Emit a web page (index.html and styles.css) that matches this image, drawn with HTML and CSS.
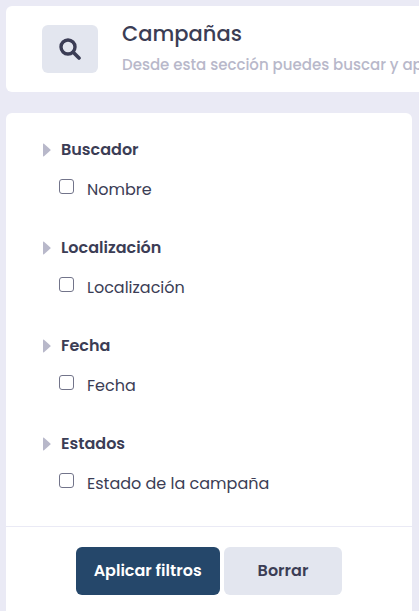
FILE: index.html
```html
<!DOCTYPE html>
<html lang="es">
<head>
<meta charset="utf-8">
<meta name="viewport" content="width=device-width, initial-scale=1">
<title>Campañas</title>
<link rel="stylesheet" href="styles.css">
</head>
<body>
<header class="page-header">
  <span class="header-icon">
    <svg viewBox="0 0 22 22" width="22" height="22" aria-hidden="true"><circle cx="9" cy="9" r="7" fill="none" stroke="currentColor" stroke-width="3.4"/><path d="M14.2 14.2L20 20" stroke="currentColor" stroke-width="3.6" stroke-linecap="round"/></svg>
  </span>
  <div class="header-text">
    <h1 class="title">Campañas</h1>
    <p class="subtitle">Desde esta sección puedes buscar y ap</p>
  </div>
</header>
<form class="panel">
  <div class="groups">
    <section class="group">
      <h2 class="group-title"><button type="button" class="toggle"><svg class="arrow" viewBox="0 0 8 14" aria-hidden="true"><path d="M0 1.2Q0 0 1 .8L7.4 6.4Q8 7 7.4 7.6L1 13.2Q0 14 0 12.8Z"/></svg>Buscador</button></h2>
      <label class="option"><input class="check" type="checkbox"><span>Nombre</span></label>
    </section>
    <section class="group">
      <h2 class="group-title"><button type="button" class="toggle"><svg class="arrow" viewBox="0 0 8 14" aria-hidden="true"><path d="M0 1.2Q0 0 1 .8L7.4 6.4Q8 7 7.4 7.6L1 13.2Q0 14 0 12.8Z"/></svg>Localización</button></h2>
      <label class="option"><input class="check" type="checkbox"><span>Localización</span></label>
    </section>
    <section class="group">
      <h2 class="group-title"><button type="button" class="toggle"><svg class="arrow" viewBox="0 0 8 14" aria-hidden="true"><path d="M0 1.2Q0 0 1 .8L7.4 6.4Q8 7 7.4 7.6L1 13.2Q0 14 0 12.8Z"/></svg>Fecha</button></h2>
      <label class="option"><input class="check" type="checkbox"><span>Fecha</span></label>
    </section>
    <section class="group">
      <h2 class="group-title"><button type="button" class="toggle"><svg class="arrow" viewBox="0 0 8 14" aria-hidden="true"><path d="M0 1.2Q0 0 1 .8L7.4 6.4Q8 7 7.4 7.6L1 13.2Q0 14 0 12.8Z"/></svg>Estados</button></h2>
      <label class="option"><input class="check" type="checkbox"><span>Estado de la campaña</span></label>
    </section>
  </div>
  <div class="actions">
    <button type="submit" class="btn btn-primary">Aplicar filtros</button>
    <button type="reset" class="btn btn-light">Borrar</button>
  </div>
</form>
</body>
</html>
```
FILE: styles.css
```css
* {
  box-sizing: border-box;
}

body {
  margin: 0;
  padding: 6px 0 0 6px;
  background: #eaeaf5;
  color: #3b3d55;
  font-family: Poppins, Inter, "Open Sans", sans-serif;
  font-size: 16px;
  line-height: 24px;
  overflow-x: hidden;
}

button,
input {
  font: inherit;
  color: inherit;
}

h1,
h2,
p {
  margin: 0;
}

.page-header {
  display: flex;
  align-items: center;
  gap: 24px;
  padding: 12px 0 12px 36px;
  background: #fff;
  border-radius: 6px 0 0 6px;
  overflow: hidden;
}

.header-icon {
  display: flex;
  flex: none;
  align-items: center;
  justify-content: center;
  width: 56px;
  height: 48px;
  border-radius: 6px;
  background: #e3e6ef;
}

.header-text {
  flex: 1;
  min-width: 0;
  white-space: nowrap;
}

.title {
  font-size: 21px;
  font-weight: 500;
  line-height: 32px;
}

.subtitle {
  color: #b8b8ca;
  font-size: 15px;
  font-weight: 500;
  line-height: 30px;
}

.panel {
  margin: 21px 7px 0 0;
  background: #fff;
  border-radius: 6px 6px 0 0;
}

.groups {
  display: grid;
  gap: 34px;
  padding: 25px 36px 30px;
}

.group {
  display: grid;
  gap: 16px;
}

.group-title {
  font-size: 16px;
  font-weight: 600;
}

.toggle {
  display: flex;
  align-items: center;
  gap: 10px;
  padding: 0 0 0 1px;
  border: 0;
  background: none;
  cursor: pointer;
}

.arrow {
  width: 8px;
  height: 14px;
  fill: #b8b8ca;
}

.option {
  display: flex;
  align-items: flex-start;
  gap: 13px;
  padding-left: 17px;
}

.check {
  appearance: none;
  flex: none;
  width: 15px;
  height: 15px;
  margin: 1px 0 0;
  border: 1px solid #72748a;
  border-radius: 3px;
  background: #fff;
}

.check:checked {
  background: #25476a;
}

.actions {
  display: flex;
  justify-content: center;
  gap: 4px;
  padding: 20px 12px 24px;
  border-top: 1px solid #eaeaf5;
}

.btn {
  height: 48px;
  border: 0;
  border-radius: 6px;
  font-size: 16px;
  font-weight: 600;
  cursor: pointer;
}

.btn-primary {
  padding: 0 18px;
  background: #25476a;
  color: #fff;
}

.btn-light {
  padding: 0 34px;
  background: #e3e6ef;
}
```
